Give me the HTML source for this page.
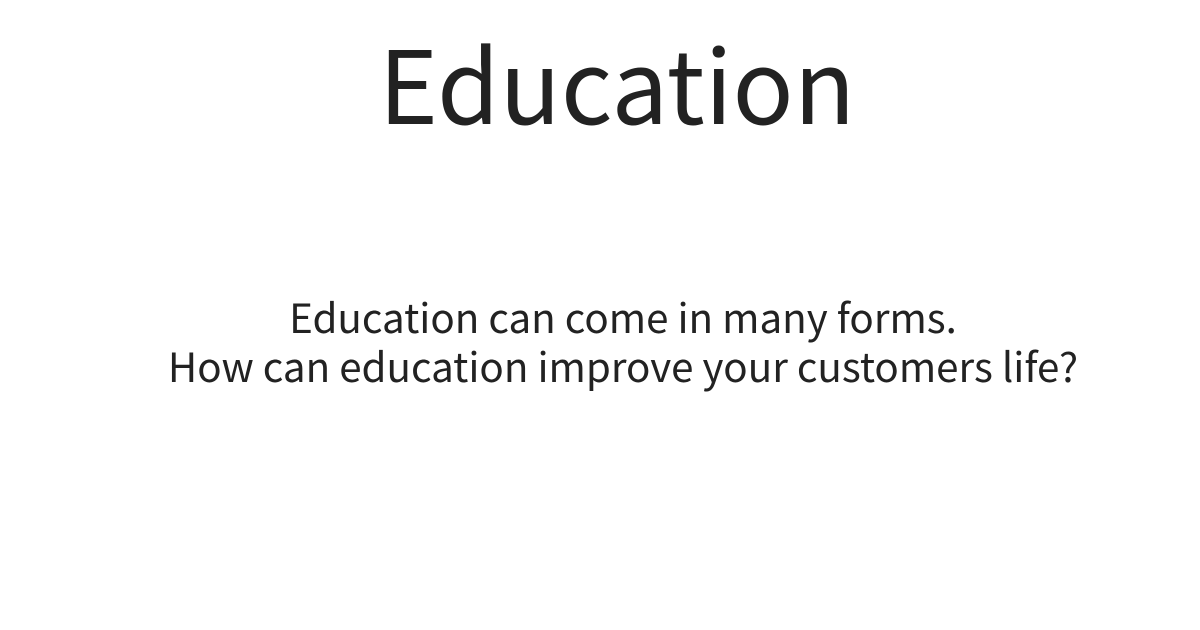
<!DOCTYPE html>
<html><head><style>
html,body{margin:0;padding:0;background:#fff;}
body{width:1200px;height:630px;position:relative;overflow:hidden;font-family:"Noto Sans CJK JP","Liberation Sans",sans-serif;color:#222;}
h1{position:absolute;left:0;width:1234px;top:31px;margin:0;font-size:101px;line-height:101px;font-weight:400;text-align:center;}
p{position:absolute;left:0;width:1246px;top:291px;margin:0;font-size:40.3px;line-height:49px;text-align:center;}
</style></head><body>
<h1>Education</h1>
<p>Education can come in many forms.<br>How can education improve your customers life?</p>
</body></html>
